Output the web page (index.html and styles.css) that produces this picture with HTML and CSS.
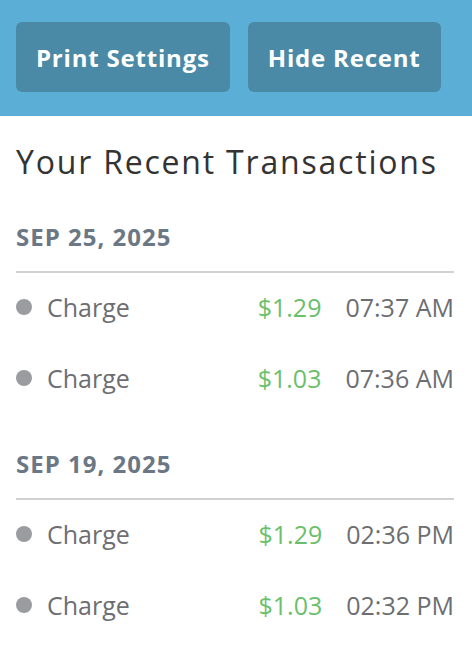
FILE: index.html
```html
<!DOCTYPE html>
<html lang="en">
<head>
    <meta charset="UTF-8">
    <meta name="viewport" content="width=device-width, initial-scale=1.0">
    <title>Recent Transactions</title>
    <link rel="stylesheet" href="styles.css">
</head>
<body>

    <!-- Top bar -->
    <div class="toolbar">
        <button class="tool-btn">Print Settings</button>
        <button class="tool-btn">Hide Recent</button>
    </div>

    <div class="recent">
        <h2>Your Recent Transactions</h2>

        <div class="day">
            <div class="day-title">SEP 25, 2025</div>
            <div class="tx">
                <span class="dot"></span>
                <span class="tx-type">Charge</span>
                <span class="tx-amount">$1.29</span>
                <span class="tx-time">07:37 AM</span>
            </div>
            <div class="tx">
                <span class="dot"></span>
                <span class="tx-type">Charge</span>
                <span class="tx-amount">$1.03</span>
                <span class="tx-time">07:36 AM</span>
            </div>
        </div>

        <div class="day">
            <div class="day-title">SEP 19, 2025</div>
            <div class="tx">
                <span class="dot"></span>
                <span class="tx-type">Charge</span>
                <span class="tx-amount">$1.29</span>
                <span class="tx-time">02:36 PM</span>
            </div>
            <div class="tx">
                <span class="dot"></span>
                <span class="tx-type">Charge</span>
                <span class="tx-amount">$1.03</span>
                <span class="tx-time">02:32 PM</span>
            </div>
        </div>
    </div>

</body>
</html>
```

FILE: styles.css
```css
body {
    font-family: "Open Sans", sans-serif;
    background-color: #ffffff;
    margin: 0;
}

.toolbar {
    background-color: #5bafd6;
    display: flex;
    gap: 18px;
    padding: 22px 16px 24px;
}

.tool-btn {
    background-color: #4a8aa6;
    color: #ffffff;
    border: none;
    border-radius: 6px;
    height: 70px;
    padding: 0 20px;
    font-family: "Open Sans", sans-serif;
    font-size: 24px;
    font-weight: 700;
    letter-spacing: 0.8px;
    cursor: pointer;
}

.recent {
    padding: 22px 18px 0 16px;
}

.recent h2 {
    margin: 0 0 38px;
    font-size: 32px;
    font-weight: 400;
    line-height: 48px;
    letter-spacing: 1.8px;
    color: #333333;
}

.day {
    margin-bottom: 38px;
}

.day:last-child {
    margin-bottom: 0;
}

.day-title {
    font-size: 24px;
    font-weight: 700;
    color: #6b7785;
    line-height: 26px;
    letter-spacing: 1px;
    padding-bottom: 21px;
    border-bottom: 2px solid #d0d0d0;
}

.day-title + .tx {
    margin-top: -2px;
}

.tx {
    display: flex;
    align-items: center;
    height: 71px;
    font-size: 25px;
}

.dot {
    width: 16px;
    height: 16px;
    border-radius: 50%;
    background-color: #9a9ca0;
    margin-right: 15px;
}

.tx-type {
    color: #6d6e72;
    flex: 1;
}

.tx-amount {
    color: #6bbf6b;
    margin-right: 24px;
}

.tx-time {
    color: #6d6e72;
}
```
